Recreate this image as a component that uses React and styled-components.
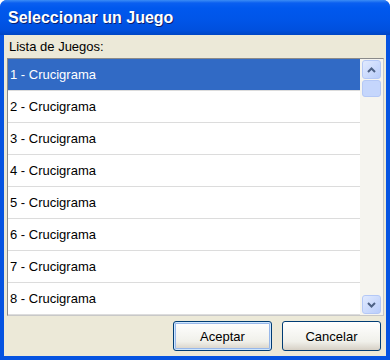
import React from "react";
import styled, { createGlobalStyle } from "styled-components";

const GlobalStyle = createGlobalStyle`
    html, body {
        margin: 0;
        padding: 0;
        background: #ffffff;
    }
    body {
        font-family: "Liberation Sans", Arial, sans-serif;
    }
`;

const games = [1, 2, 3, 4, 5, 6, 7, 8].map((n) => ({
    id: n,
    name: `${n} - Crucigrama`,
}));

const App = () => {
    return (
        <>
            <GlobalStyle />
            <Window>
                <TitleBar>
                    <Title>Seleccionar un Juego</Title>
                </TitleBar>
                <Body>
                    <Label>Lista de Juegos:</Label>
                    <ListBox>
                        <Rows>
                            {games.map((game) => (
                                <Row key={game.id} selected={game.id === 1}>
                                    {game.name}
                                </Row>
                            ))}
                        </Rows>
                        <ScrollBar>
                            <ArrowButton>
                                <svg width="9" height="6" viewBox="0 0 9 6">
                                    <path d="M1 5 L4.5 1.5 L8 5" fill="none" stroke="#4d6185" strokeWidth="2" />
                                </svg>
                            </ArrowButton>
                            <Thumb />
                            <Track />
                            <ArrowButton>
                                <svg width="9" height="6" viewBox="0 0 9 6">
                                    <path d="M1 1 L4.5 4.5 L8 1" fill="none" stroke="#4d6185" strokeWidth="2" />
                                </svg>
                            </ArrowButton>
                        </ScrollBar>
                    </ListBox>
                    <Footer>
                        <Button primary>Aceptar</Button>
                        <Button>Cancelar</Button>
                    </Footer>
                </Body>
            </Window>
        </>
    );
};

const Window = styled.div`
    width: 390px;
    height: 360px;
    display: flex;
    flex-direction: column;
    background: #0553e1;
    border-radius: 7px 7px 0 0;
    overflow: hidden;
`;

const TitleBar = styled.div`
    height: 35px;
    flex: none;
    display: flex;
    align-items: center;
    padding: 0 8px;
    background: linear-gradient(
        to bottom,
        #3b8cf5 0px,
        #0a5ff0 3px,
        #0058ee 8px,
        #0055e8 20px,
        #0050de 30px,
        #0046c4 35px
    );
`;

const Title = styled.span`
    color: #ffffff;
    font-family: "Liberation Sans", Arial, sans-serif;
    font-weight: bold;
    font-size: 16px;
    text-shadow: 1px 1px 0 #0a1e6e;
`;

const Body = styled.div`
    flex: 1;
    display: flex;
    flex-direction: column;
    background: #ece9d8;
    margin: 0 4px 4px 4px;
    padding: 0 2px 0 3px;
`;

const Label = styled.div`
    height: 23px;
    flex: none;
    display: flex;
    align-items: center;
    padding-left: 2px;
    font-size: 13px;
    color: #000000;
`;

const ListBox = styled.div`
    height: 258px;
    flex: none;
    box-sizing: border-box;
    border: 1px solid #8a8a8a;
    border-right-color: #c8c8c8;
    border-bottom-color: #c8c8c8;
    background: #ffffff;
    display: flex;
    overflow: hidden;
`;

const Rows = styled.div`
    flex: 1;
    display: flex;
    flex-direction: column;
`;

const Row = styled.div`
    height: 32px;
    flex: none;
    box-sizing: border-box;
    display: flex;
    align-items: center;
    padding-left: 2px;
    font-size: 13px;
    border-bottom: 1px solid #dcdcdc;
    background: ${(p) => (p.selected ? "#316ac5" : "#ffffff")};
    color: ${(p) => (p.selected ? "#ffffff" : "#000000")};
`;

const ScrollBar = styled.div`
    width: 23px;
    flex: none;
    display: flex;
    flex-direction: column;
    align-items: center;
    padding: 1px 0;
    box-sizing: border-box;
    background: #f5f4ef;
`;

const ArrowButton = styled.div`
    width: 19px;
    height: 19px;
    flex: none;
    box-sizing: border-box;
    border: 1px solid #b4c8f6;
    border-radius: 3px;
    background: linear-gradient(to bottom right, #e1eafe, #b9cdfb);
    display: flex;
    align-items: center;
    justify-content: center;
`;

const Thumb = styled.div`
    width: 19px;
    height: 17px;
    flex: none;
    margin-top: 1px;
    box-sizing: border-box;
    border: 1px solid #b4c8f6;
    border-radius: 3px;
    background: #c5d6fc;
`;

const Track = styled.div`
    flex: 1;
`;

const Footer = styled.div`
    flex: 1;
    display: flex;
    justify-content: flex-end;
    align-items: center;
    gap: 10px;
    padding-right: 3px;
`;

const Button = styled.button`
    width: 99px;
    height: 30px;
    box-sizing: border-box;
    border: 1px solid #003c74;
    border-radius: 3px;
    background: linear-gradient(to bottom, #ffffff, #f0f0ea 70%, #d6d0c5);
    font-family: "Liberation Sans", Arial, sans-serif;
    font-size: 13px;
    color: #000000;
    padding: 0;
    box-shadow: ${(p) =>
        p.primary ? "inset 0 0 0 1px #cee7ff, inset 0 0 0 2px #98b8ea" : "none"};
`;

export default App;
